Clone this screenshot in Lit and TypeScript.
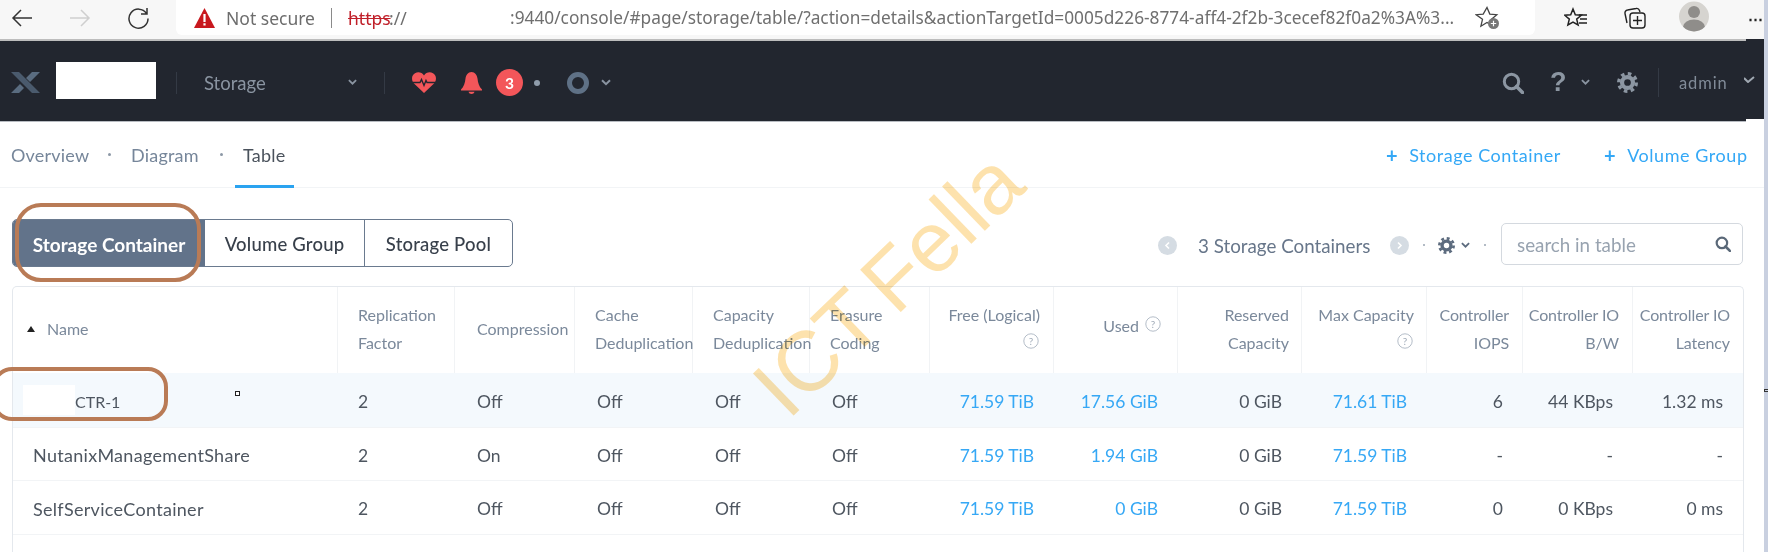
import { LitElement, html, css, svg } from "lit";
import { customElement } from "lit/decorators.js";

const gear = (size: number, color: string) => html`<svg width=${size} height=${size} viewBox="0 0 20 20">
  <circle cx="10" cy="10" r="5.2" fill="none" stroke=${color} stroke-width="4"></circle>
  <circle cx="10" cy="10" r="8.4" fill="none" stroke=${color} stroke-width="3.2" stroke-dasharray="3.4 3.2"></circle>
</svg>`;
const chev = (w: number, color: string, sw = 2) => html`<svg width=${w} height=${w * 0.7} viewBox="0 0 10 7">
  <path d="M1 1.2 5 5.2 9 1.2" fill="none" stroke=${color} stroke-width=${sw}></path></svg>`;
const mag = (size: number, color: string, sw = 3) => html`<svg width=${size} height=${size} viewBox="0 0 22 22">
  <circle cx="9.5" cy="9.5" r="7.2" fill="none" stroke=${color} stroke-width=${sw}></circle>
  <path d="M14.5 14.5 20.5 20.5" stroke=${color} stroke-width=${sw + 0.6} stroke-linecap="round"></path></svg>`;
const qmark = html`<svg width="16" height="16" viewBox="0 0 16 16">
  <circle cx="8" cy="8" r="7.2" fill="none" stroke="#b4bdc8" stroke-width="1"></circle>
  <text x="8" y="11.6" text-anchor="middle" font-size="10" fill="#a3adba" font-family="Lato, sans-serif">?</text></svg>`;

type H = { lines: string[]; right?: boolean; pad?: number; help?: "inline" | "below"; narrow?: boolean };
const heads: H[] = [
  { lines: ["Replication", "Factor"] },
  { lines: ["Compression"], pad: 22 },
  { lines: ["Cache", "Deduplication"] },
  { lines: ["Capacity", "Deduplication"] },
  { lines: ["Erasure", "Coding"] },
  { lines: ["Free (Logical)"], right: true, help: "below", pad: 13 },
  { lines: ["Used"], right: true, help: "inline", pad: 16 },
  { lines: ["Reserved", "Capacity"], right: true, pad: 12 },
  { lines: ["Max Capacity"], right: true, help: "below", pad: 12 },
  { lines: ["Controller", "IOPS"], right: true, narrow: true },
  { lines: ["Controller IO", "B/W"], right: true, narrow: true },
  { lines: ["Controller IO", "Latency"], right: true, narrow: true },
];

const rows = [
  { name: "CTR-1", h: 55, sel: true, v: ["2", "Off", "Off", "Off", "Off", "71.59 TiB", "17.56 GiB", "0 GiB", "71.61 TiB", "6", "44 KBps", "1.32 ms"] },
  { name: "NutanixManagementShare", h: 53, v: ["2", "On", "Off", "Off", "Off", "71.59 TiB", "1.94 GiB", "0 GiB", "71.59 TiB", "-", "-", "-"] },
  { name: "SelfServiceContainer", h: 54, v: ["2", "Off", "Off", "Off", "Off", "71.59 TiB", "0 GiB", "0 GiB", "71.59 TiB", "0", "0 KBps", "0 ms"] },
];
const linkCols = new Set([5, 6, 8]);

@customElement("app-root")
export class AppRoot extends LitElement {
  static styles = css`
    :host { display: block; width: 1768px; height: 552px; overflow: hidden; position: relative; background: #fff; font-family: Lato, "Open Sans", sans-serif; }
    .page { display: flex; width: 1768px; height: 552px; }
    .main { width: 1764px; display: flex; flex-direction: column; }
    .strip { width: 4px; background: #c9d0e0; }
    .chrome { height: 39px; background: #f7f7f7; display: flex; font-family: "Noto Sans", sans-serif; }
    .cbtn { display: flex; align-items: center; height: 36px; }
    .pill { margin-left: 26px; width: 1364px; height: 35px; background: #fff; border-radius: 0 0 6px 6px; display: flex; align-items: center; font-size: 17.5px; color: #6f6f6f; white-space: nowrap; }
    .ns { margin-left: 11px; width: 99px; color: #6d6d6d; }
    .sep { width: 1px; height: 20px; background: #8a8a8a; margin-left: 6px; }
    .https { margin-left: 16px; color: #c0202a; text-decoration: line-through; width: 41px; }
    .sl { width: 121px; }
    .url { font-size: 17.3px; width: 945px; }
    .edge { display: flex; height: 2px; }
    .edge i { display: block; width: 1746px; background: #bdbdbd; }
    .edge b { flex: 1; background: #22262f; }
    .nav { height: 78px; box-sizing: border-box; padding-top: 5px; background: #22262f; display: flex; align-items: center; color: #8a94a1; font-size: 18.5px; }
    .nav-end { height: 2px; width: 1746px; background: #22262f; }
    .navline { height: 1px; width: 1746px; background: #b8bcc2; }
    .shot { width: 100px; height: 37px; background: #fff; margin-left: 16px; margin-top: -5px; }
    .vsep { width: 1px; background: #343a45; height: 22px; }
    .badge { width: 27px; height: 27px; border-radius: 50%; background: #f3565a; color: #fff; font-weight: 700; font-size: 15.5px; display: flex; align-items: center; justify-content: center; }
    .ndot { width: 6px; height: 6px; border-radius: 50%; background: #8f9cab; }
    .admin { font-size: 16.5px; color: #818b98; letter-spacing: 0.9px; }
    .tabs { height: 66px; display: flex; align-items: center; border-bottom: 1px solid #f2f4f6; font-size: 18px; letter-spacing: 0.2px; color: #76869a; padding-left: 11px; box-sizing: border-box; }
    .tabs span { white-space: nowrap; }
    .tdot { width: 3px; height: 3px; border-radius: 50%; background: #8c98a6; }
    .tab-on { color: #4a525c; position: relative; }
    .tab-on::after { content: ""; position: absolute; left: -8px; right: -9px; bottom: -22px; height: 3px; background: #2aa3f0; }
    .add { color: #34a8f6; display: flex; align-items: center; letter-spacing: 0.55px; }
    .plus { font-size: 20px; font-weight: 700; margin-right: 11px; }
    .toolbar { height: 98px; box-sizing: border-box; padding: 31px 0 0 12px; display: flex; align-items: flex-start; }
    .seg { display: flex; height: 48px; width: 501px; border: 1px solid #6a7a8f; border-radius: 5px; box-sizing: border-box; overflow: hidden; font-size: 18.5px; font-weight: 500; letter-spacing: 0.2px; color: #38404b; }
    .seg div { display: flex; align-items: center; justify-content: center; padding-top: 2px; box-sizing: border-box; }
    .seg .on { width: 192px; background: #62738a; color: #fff; font-weight: 700; letter-spacing: 0; font-size: 19px; }
    .seg .m { width: 160px; border-right: 1px solid #6a7a8f; }
    .seg .n { flex: 1; }
    .pager { display: flex; align-items: center; height: 48px; margin-left: 645px; margin-top: 2px; color: #67768a; font-size: 18.8px; }
    .circ { width: 19px; height: 19px; border-radius: 50%; background: #d5dce3; color: #fff; display: flex; align-items: center; justify-content: center; }
    .pdot { width: 2px; height: 2px; background: #9aa5b2; border-radius: 50%; }
    .search { margin-left: 15px; margin-top: 4px; width: 242px; height: 42px; border: 1px solid #d4d9df; border-radius: 5px; box-sizing: border-box; display: flex; align-items: center; justify-content: space-between; padding: 0 11px 0 15px; color: #98a3b0; font-size: 18.8px; }
    .table { margin-left: 12px; width: 1732px; flex: 1; box-sizing: border-box; border: 1px solid #e4e8ed; border-bottom: none; border-radius: 5px 5px 0 0; }
    .grid { display: grid; grid-template-columns: 325px 117px 120px 118px 117px 120px 124px 124px 124px 125px 96px 110px 110px; }
    .head { height: 86px; color: #7b899b; font-size: 16px; line-height: 28.5px; }
    .hc { border-right: 1px solid #f1f3f5; display: flex; flex-direction: column; justify-content: center; white-space: nowrap; box-sizing: border-box; padding-bottom: 2px; }
    .hc:last-child { border-right: none; }
    .hc.r { align-items: flex-end; text-align: right; }
    .hc.narrow { letter-spacing: -0.1px; }
    .hc.tight { line-height: 26px; padding-bottom: 10px; }
    .hc.tight .qh { display: flex; margin-top: 5px; padding-right: 1px; }
    .inl { display: flex; align-items: center; gap: 6px; margin-top: -6px; }
    .inl svg { margin-top: -5px; }
    .namec { flex-direction: row; align-items: center; justify-content: flex-start; padding-left: 14px; gap: 12px; }
    .row { font-size: 17.5px; color: #4e5660; border-bottom: 1px solid #f2f4f6; box-sizing: border-box; align-items: center; padding-top: 2px; }
    .row.sel { background: #f4f9fd; }
    .cell { white-space: nowrap; padding-left: 22px; }
    .cell.first { padding-left: 20px; }
    .cell.r { text-align: right; padding: 0 20px 0 0; }
    .cell.l { color: #36a8f5; }
    .namecell { display: flex; align-items: center; padding-left: 20px; font-size: 18px; letter-spacing: 0.3px; white-space: nowrap; }
    .namecell.p { padding-left: 10px; font-size: 16px; letter-spacing: 0; }
    .blank { width: 52px; height: 30px; background: #fff; margin-top: -2px; }
    .tiny { width: 3px; height: 3px; border: 1px solid #222; margin-left: 115px; margin-top: -15px; background: #fff; }
    .ring { position: absolute; border: 4.5px solid #b97b56; box-sizing: border-box; border-radius: 26px; pointer-events: none; }
    .r1 { left: 15px; top: 203px; width: 186px; height: 79px; }
    .r2 { left: -8px; top: 367px; width: 176px; height: 54px; border-radius: 20px; }
    .mark { position: absolute; left: 888px; top: 284px; transform: translate(-50%, -50%) rotate(-44deg); font-family: "Liberation Sans", sans-serif; font-size: 85px; word-spacing: -9px; color: #fde2ad; white-space: nowrap; pointer-events: none; mix-blend-mode: multiply; }
    .brk { position: absolute; left: 1764px; top: 389px; width: 4px; height: 3px; border: 1px solid #333; border-right: none; box-sizing: border-box; }
  `;

  render() {
    return html`
      <div class="page">
        <div class="main">
          ${this.chrome()}
          <div class="edge"><i></i><b></b></div>
          ${this.nav()}
          <div class="nav-end"></div>
          <div class="navline"></div>
          ${this.tabs()}
          ${this.toolbar()}
          ${this.table()}
        </div>
        <div class="strip"></div>
      </div>
      <div class="mark">ICT Fella</div>
      <div class="ring r1"></div>
      <div class="ring r2"></div>
      <div class="brk"></div>
    `;
  }

  chrome() {
    return html`<div class="chrome">
      <div class="cbtn" style="margin-left:11px">
        <svg width="22" height="20" viewBox="0 0 22 20"><path d="M21 10H2M10 2 2 10l8 8" fill="none" stroke="#333" stroke-width="1.5"></path></svg>
      </div>
      <div class="cbtn" style="margin-left:36px">
        <svg width="22" height="20" viewBox="0 0 22 20"><path d="M1 10h19M12 2l8 8-8 8" fill="none" stroke="#cfcfcf" stroke-width="1.5"></path></svg>
      </div>
      <div class="cbtn" style="margin-left:36px">
        <svg width="23" height="23" viewBox="0 0 23 23"><path d="M19.5 6.5A9.5 9.5 0 1 0 21 11.5M20 1v6h-6" fill="none" stroke="#333" stroke-width="1.5"></path></svg>
      </div>
      <div class="pill">
        <svg style="margin-left:18px" width="21" height="20" viewBox="0 0 21 20"><path d="M10.5 0 21 20H0Z" fill="#c8181e"></path><path d="M9.4 6h2.2v8H9.4zM9.4 15.2h2.2v2.2H9.4z" fill="#fff"></path></svg>
        <span class="ns">Not secure</span>
        <span class="sep"></span>
        <span class="https">https</span><span class="sl">://</span><span class="url">:9440/console/#page/storage/table/?action=details&amp;actionTargetId=0005d226-8774-aff4-2f2b-3cecef82f0a2%3A%3...</span>
        <svg style="margin-left:20px" width="25" height="25" viewBox="0 0 25 25"><path d="M12 2.5l2.8 6.6 7 .6-5.3 4.6 1.6 6.9-6.1-3.7-6.1 3.7 1.6-6.9L1.2 9.7l7-.6z" fill="none" stroke="#444" stroke-width="1.3"></path><circle cx="18.5" cy="18.5" r="5.5" fill="#777"></circle><path d="M15.8 18.5h5.4M18.5 15.8v5.4" stroke="#fff" stroke-width="1.2"></path></svg>
      </div>
      <div class="cbtn" style="margin-left:29px">
        <svg width="24" height="22" viewBox="0 0 24 22"><path d="M9 2l2.3 5.7 6 .5-4.6 3.9 1.4 5.9L9 15l-5.1 3 1.4-5.9L.7 8.2l6-.5z" fill="none" stroke="#222" stroke-width="1.5"></path><path d="M15 8h8M16 12h7M15 16h8" stroke="#222" stroke-width="1.3"></path></svg>
      </div>
      <div class="cbtn" style="margin-left:35px">
        <svg width="23" height="23" viewBox="0 0 23 23"><path d="M4 16 2 6.5A3 3 0 0 1 4.500 3L13 1.500A3 3 0 0 1 16.500 3.500L17 5" fill="none" stroke="#222" stroke-width="1.4"></path><rect x="7" y="6" width="15" height="15" rx="3" fill="#f7f7f7" stroke="#222" stroke-width="1.4"></rect><path d="M14.500 9v9M10 13.500h9" stroke="#222" stroke-width="1.4"></path></svg>
      </div>
      <div class="cbtn" style="margin-left:33px;height:32px">
        <svg width="30" height="31" viewBox="0 0 30 31"><defs><clipPath id="av"><circle cx="15" cy="15.500" r="15"></circle></clipPath></defs><circle cx="15" cy="15.500" r="15" fill="#d6d4d0"></circle><g clip-path="url(#av)" fill="#8f8d8a"><circle cx="15" cy="11" r="6"></circle><ellipse cx="15" cy="26" rx="11" ry="7.500"></ellipse></g></svg>
      </div>
      <div class="cbtn" style="margin-left:39px;color:#222;font-size:15px;letter-spacing:1px;font-weight:700">⋯</div>
    </div>`;
  }

  nav() {
    return html`<div class="nav">
      <svg style="margin-left:11px" width="29" height="21" viewBox="0 0 29 21">
        <path d="M0 0h8l21 21h-8Z" fill="#4a5a6d"></path>
        <path d="M21 0h8L19 10l-4-4ZM0 21h8l5-5-4-4Z" fill="#5a6c80"></path>
      </svg>
      <div class="shot"></div>
      <div class="vsep" style="margin-left:20px"></div>
      <span style="margin-left:27px;width:144px">Storage</span>
      ${chev(9, "#8a94a1")}
      <div class="vsep" style="margin-left:27px"></div>
      <svg style="margin-left:27px" width="24" height="21" viewBox="0 0 24 21"><path d="M12 21 2 11.500C-1 8-.5 3 3 1.200 6.500-.6 10 .6 12 3.500 14 .6 17.500-.6 21 1.200 24.500 3 25 8 22 11.500Z" fill="#f3565a"></path><path d="M0 10.500h8l1.500-3 2.500 6 2-5 1 2h9" fill="none" stroke="#22262f" stroke-width="1.4"></path></svg>
      <svg style="margin-left:25px" width="21" height="22" viewBox="0 0 21 22"><path d="M10.500 0C7 0 5 3 4.500 6.500 4 11 3 14.500 0 17.500v1h21v-1c-3-3-4-6.500-4.500-11C16 3 14 0 10.500 0Z" fill="#f3565a"></path><path d="M7.500 19.800h6c-.5 1.500-1.500 2.200-3 2.200s-2.500-.7-3-2.200Z" fill="#f3565a"></path></svg>
      <div class="badge" style="margin-left:14px">3</div>
      <div class="ndot" style="margin-left:11px"></div>
      <svg style="margin-left:27px" width="22" height="22" viewBox="0 0 22 22"><circle cx="11" cy="11" r="8.500" fill="none" stroke="#5f7186" stroke-width="5"></circle></svg>
      <span style="margin-left:12px;display:flex">${chev(10, "#8a94a1")}</span>
      <span style="margin-left:891px;display:flex">${mag(22, "#8c96a2")}</span>
      <span style="margin-left:26px;width:13px;font-size:27px;font-weight:900;color:#8c96a2;line-height:1;font-family:'Liberation Sans',sans-serif">?</span>
      <span style="margin-left:18px;display:flex">${chev(9, "#8a94a1")}</span>
      <span style="margin-left:27px;display:flex">${gear(21, "#8c96a2")}</span>
      <div class="vsep" style="margin-left:20px;height:29px"></div>
      <span class="admin" style="margin-left:20px;width:65px">admin</span>
      <svg width="11" height="7" viewBox="0 0 11 7" style="margin-top:-6px"><path d="M0 2 4 6 10 1" fill="none" stroke="#a0a8b2" stroke-width="2"></path></svg>
    </div>`;
  }

  tabs() {
    return html`<div class="tabs">
      <span style="width:77px">Overview</span>
      <span class="tdot" style="margin-left:20px"></span>
      <span style="margin-left:20px;width:69px">Diagram</span>
      <span class="tdot" style="margin-left:20px"></span>
      <span class="tab-on" style="margin-left:20px;width:42px">Table</span>
      <span class="add" style="margin-left:1101px;width:172px"><span class="plus">+</span>Storage Container</span>
      <span class="add" style="margin-left:46px"><span class="plus">+</span>Volume Group</span>
    </div>`;
  }

  toolbar() {
    const left = svg`<path d="M6 1.500 3 4.500l3 3" fill="none" stroke="#fff" stroke-width="1.600"></path>`;
    const right = svg`<path d="M3 1.500l3 3-3 3" fill="none" stroke="#fff" stroke-width="1.600"></path>`;
    return html`<div class="toolbar">
      <div class="seg"><div class="on">Storage Container</div><div class="m">Volume Group</div><div class="n">Storage Pool</div></div>
      <div class="pager">
        <div class="circ"><svg width="9" height="9" viewBox="0 0 9 9">${left}</svg></div>
        <span style="margin-left:21px;width:172px;white-space:nowrap">3 Storage Containers</span>
        <div class="circ" style="margin-left:20px"><svg width="9" height="9" viewBox="0 0 9 9">${right}</svg></div>
        <div class="pdot" style="margin-left:14px"></div>
        <span style="margin-left:13px;display:flex">${gear(17, "#5c6b7e")}</span>
        <span style="margin-left:6px;display:flex">${chev(9, "#5c6b7e")}</span>
        <div class="pdot" style="margin-left:14px"></div>
      </div>
      <div class="search"><span>search in table</span>${mag(16, "#5a6878", 3)}</div>
    </div>`;
  }

  table() {
    return html`<div class="table">
      <div class="grid head">
        <div class="hc namec">
          <svg width="8" height="6" viewBox="0 0 8 6"><path d="M4 0 8 6H0Z" fill="#222"></path></svg><span>Name</span>
        </div>
        ${heads.map((h) => this.headCell(h))}
      </div>
      ${rows.map((r) => html`<div class="grid row ${r.sel ? "sel" : ""}" style="height:${r.h}px">
        ${r.sel
          ? html`<div class="namecell p"><span class="blank"></span><span>${r.name}</span><span class="tiny"></span></div>`
          : html`<div class="namecell">${r.name}</div>`}
        ${r.v.map((v, i) => html`<div class="cell ${i === 0 ? "first" : ""} ${i >= 5 ? "r" : ""} ${linkCols.has(i) ? "l" : ""}">${v}</div>`)}
      </div>`)}
    </div>`;
  }

  headCell(h: H) {
    const side = h.right ? `padding-right:${h.pad ?? 13}px` : `padding-left:${h.pad ?? 20}px`;
    if (h.help === "inline") {
      return html`<div class="hc r" style=${side}><div class="inl"><span>${h.lines[0]}</span>${qmark}</div></div>`;
    }
    if (h.help === "below") {
      return html`<div class="hc r tight" style=${side}><span>${h.lines[0]}</span><span class="qh">${qmark}</span></div>`;
    }
    return html`<div class="hc ${h.right ? "r" : ""} ${h.narrow ? "narrow" : ""}" style=${side}>${h.lines.map((l) => html`<span>${l}</span>`)}</div>`;
  }
}
